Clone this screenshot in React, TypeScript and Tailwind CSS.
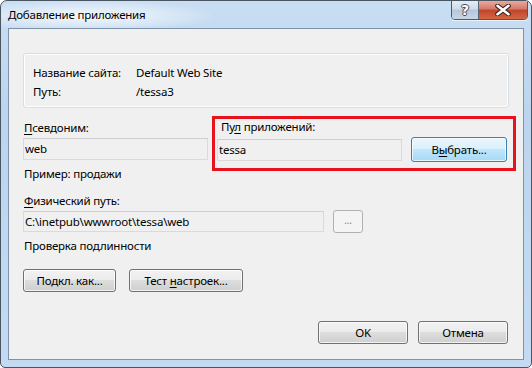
import React from "react";

const font = {
  fontFamily: '"Segoe UI", "Noto Sans", "Open Sans", sans-serif',
  letterSpacing: "-0.2px",
};

function Btn({
  children,
  w,
  blue = false,
  disabled = false,
  h = "h-[23px]",
}: {
  children: React.ReactNode;
  w: string;
  blue?: boolean;
  disabled?: boolean;
  h?: string;
}) {
  if (blue) {
    return (
      <div
        className={`${w} ${h} rounded-[3px] border border-[#3c7fb1] flex items-center justify-center text-[11.5px] text-black bg-[linear-gradient(to_bottom,#eaf6fd_0%,#d9f0fc_48%,#bee6fd_50%,#a7d9f5_100%)] shadow-[inset_0_0_0_1px_rgba(255,255,255,0.7)]`}
      >
        {children}
      </div>
    );
  }
  if (disabled) {
    return (
      <div
        className={`${w} ${h} rounded-[3px] border border-[#adb2b5] flex items-center justify-center text-[11.5px] text-[#838383] bg-[#f4f4f4]`}
      >
        {children}
      </div>
    );
  }
  return (
    <div
      className={`${w} ${h} rounded-[3px] border border-[#707070] flex items-center justify-center text-[11.5px] text-black bg-[linear-gradient(to_bottom,#f2f2f2_0%,#ebebeb_48%,#dddddd_50%,#cfcfcf_100%)] shadow-[inset_0_0_0_1px_rgba(255,255,255,0.75)]`}
    >
      {children}
    </div>
  );
}

function TextBox({ value, w, h = "h-[22px]" }: { value: string; w: string; h?: string }) {
  return (
    <div
      className={`${w} ${h} border border-[#dadada] border-t-[#cfcfcf] bg-[#f0f0f0] flex items-center pl-[1px] text-[11.5px] text-black`}
    >
      {value}
    </div>
  );
}

export default function App() {
  return (
    <div className="w-[532px] h-[368px] bg-white" style={font}>
      <div className="relative w-[532px] h-[368px] rounded-t-[7px] rounded-b-[5px] border border-[#4a5562] bg-[linear-gradient(to_bottom,#c9def3_0%,#bcd5ee_30%,#c3daf2_100%)] flex flex-col overflow-hidden">
        {/* title bar */}
        <div className="relative h-[27px] flex items-start shrink-0">
          <div className="absolute left-0 top-0 w-[210px] h-[27px] bg-[radial-gradient(ellipse_at_40%_55%,rgba(255,255,255,0.8)_0%,rgba(255,255,255,0.35)_45%,rgba(255,255,255,0)_75%)]" />
          <div className="relative pl-[7px] pt-[6px] text-[11.5px] leading-[16px] text-black">
            Добавление приложения
          </div>
          <div className="ml-auto mr-[3px] flex h-[20px] -mt-[1px] rounded-b-[4px] border border-[#4b5866] overflow-hidden shadow-[0_1px_0_rgba(255,255,255,0.6)]">
            <div className="w-[27px] h-full flex items-center justify-center border-r border-[#5a6572] bg-[linear-gradient(to_bottom,#e3ecf6_0%,#cfdceb_45%,#b6c6da_50%,#c8d6e6_100%)]">
              <span
                className="text-[14px] font-bold leading-none text-white"
                style={{
                  textShadow:
                    "1px 0 0 #3d4a5a, -1px 0 0 #3d4a5a, 0 1px 0 #3d4a5a, 0 -1px 0 #3d4a5a",
                  fontFamily: '"DejaVu Sans", sans-serif',
                  letterSpacing: 0,
                }}
              >
                ?
              </span>
            </div>
            <div className="w-[48px] h-full flex items-center justify-center bg-[linear-gradient(to_bottom,#e9a99b_0%,#d47a67_45%,#c2432f_50%,#d2683f_100%)]">
              <svg width="18" height="12" viewBox="0 0 18 12">
                <path
                  d="M3.5 1.8 L14.5 10.2 M14.5 1.8 L3.5 10.2"
                  stroke="#3b2320"
                  strokeWidth="4.6"
                  strokeLinecap="round"
                />
                <path
                  d="M3.5 1.8 L14.5 10.2 M14.5 1.8 L3.5 10.2"
                  stroke="#ffffff"
                  strokeWidth="2.6"
                  strokeLinecap="round"
                />
              </svg>
            </div>
          </div>
        </div>

        {/* client area */}
        <div className="mx-[7px] h-[332px] border border-[#7f93a8] bg-[#f0f0f0] flex flex-col text-[11.5px] text-black">
          {/* group box */}
          <div className="ml-[14px] mt-[24px] w-[486px] h-[55px] rounded-[3px] border border-[#d5dfe5] shadow-[inset_0_0_0_1px_#ffffff] pt-[9px] pl-[9px]">
            <div className="flex h-[19px] leading-[19px]">
              <div className="w-[103px]">Название сайта:</div>
              <div>Default Web Site</div>
            </div>
            <div className="flex h-[19px] leading-[19px]">
              <div className="w-[103px]">Путь:</div>
              <div>/tessa3</div>
            </div>
          </div>

          {/* alias / pool */}
          <div className="flex ml-[14px] mt-[12px]">
            <div className="flex flex-col w-[185px]">
              <div className="leading-[16px] pl-[1px]">
                <span className="underline underline-offset-2">П</span>севдоним:
              </div>
              <div className="mt-[2px]">
                <TextBox value="web" w="w-[185px]" />
              </div>
              <div className="mt-[6px] leading-[16px] pl-[1px]">Пример: продажи</div>
            </div>
            <div className="flex flex-col ml-[9px]">
              <div className="leading-[16px] pl-[4px] -mt-[1px] h-[17px]">
                Пу<span className="underline underline-offset-2">л</span> приложений:
              </div>
              <div className="flex items-center mt-[1px] h-[25px]">
                <TextBox value="tessa" w="w-[185px]" />
                <div className="ml-[9px]">
                  <Btn w="w-[96px]" blue h="h-[25px]">
                    <span>
                      В<span className="underline underline-offset-2">ы</span>брать...
                    </span>
                  </Btn>
                </div>
              </div>
            </div>
          </div>

          {/* physical path */}
          <div className="ml-[14px] mt-[11px] leading-[16px] pl-[1px]">
            <span className="underline underline-offset-2">Ф</span>изический путь:
          </div>
          <div className="ml-[14px] mt-[1px] flex items-center h-[23px]">
            <TextBox value="C:\inetpub\wwwroot\tessa\web" w="w-[301px]" h="h-[21px]" />
            <div className="ml-[9px]">
              <Btn w="w-[30px]" disabled>
                <span className="text-[10px] -mt-[2px]">...</span>
              </Btn>
            </div>
          </div>
          <div className="ml-[14px] mt-[5px] leading-[16px] pl-[1px]">Проверка подлинности</div>

          <div className="ml-[14px] mt-[15px] flex gap-[13px]">
            <Btn w="w-[93px]">Подкл. как...</Btn>
            <Btn w="w-[114px]">
              <span>
                Тест <span className="underline underline-offset-2">н</span>астроек...
              </span>
            </Btn>
          </div>

          <div className="mt-[29px] flex justify-end pr-[15px] gap-[10px]">
            <Btn w="w-[90px]">OK</Btn>
            <Btn w="w-[90px]">Отмена</Btn>
          </div>
        </div>

        {/* red annotation box */}
        <div className="absolute left-[211px] top-[115px] w-[304px] h-[55px] border-[3px] border-[#e8111d] pointer-events-none" />
      </div>
    </div>
  );
}
